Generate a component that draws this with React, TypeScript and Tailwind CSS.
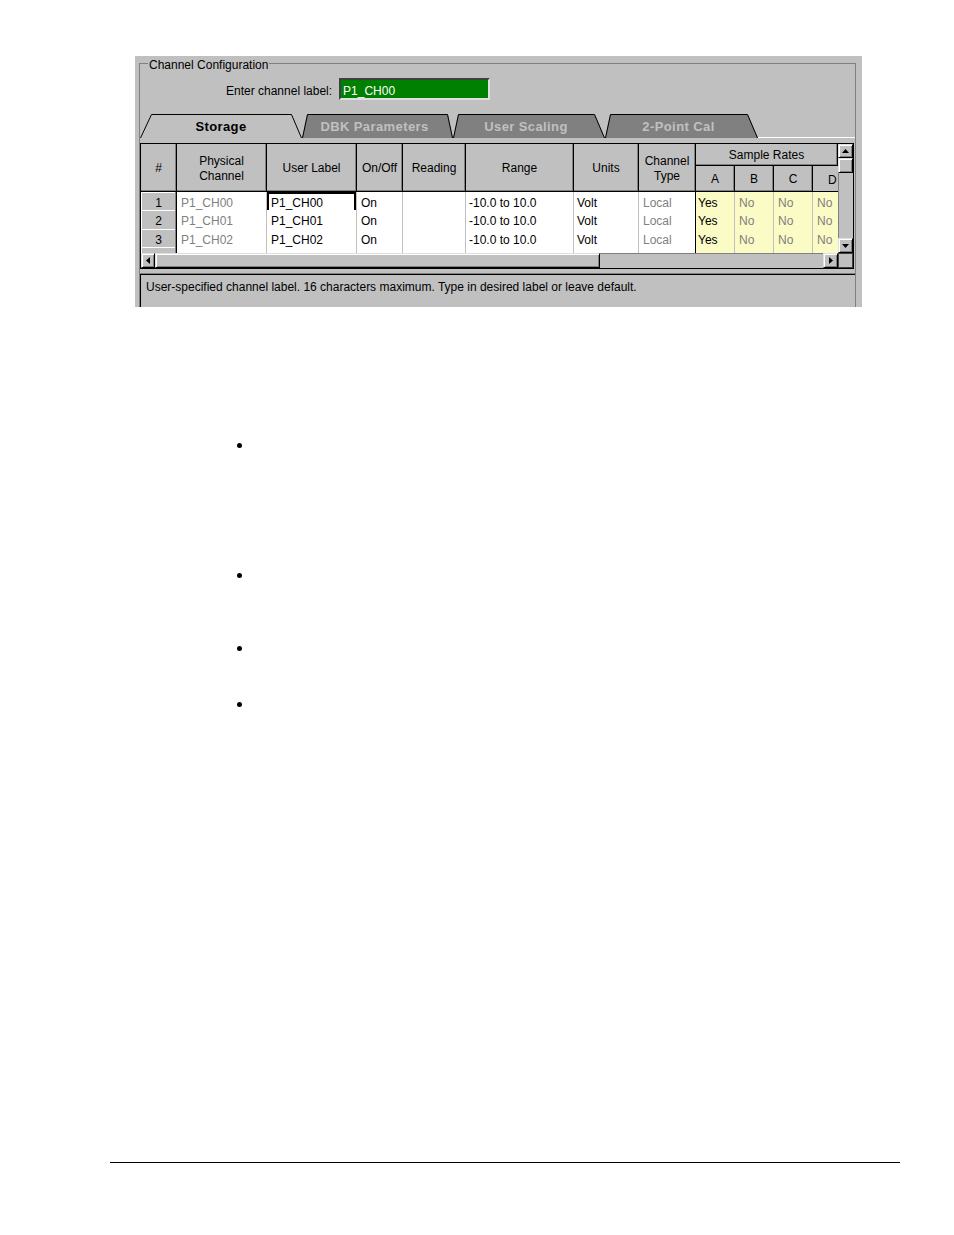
import React from "react";

const FONT = "font-['Liberation_Sans',Arial,sans-serif]";

const COLS =
  "grid grid-cols-[36px_90px_90px_46px_63px_108px_65px_57px_39px_39px_39px_25px]";

const HEAD =
  "flex items-center justify-center pt-[2px] bg-[#c0c0c0] border-r border-b border-black shadow-[inset_-1px_-1px_0_#808080] text-center leading-[15px]";

const NUM =
  "flex items-center justify-center pt-[2px] bg-[#c0c0c0] border-r border-b border-black shadow-[inset_-1px_-1px_0_#808080,inset_1px_1px_0_#ffffff]";

const CELL =
  "flex items-center pt-[2px] border-r border-b border-[#c0c0c0] whitespace-nowrap overflow-hidden";

const WHITE = "bg-white";
// pale yellow "dithered" background of the sample-rate cells
const DOTS = "bg-[#fbfbc6]";

const BTN =
  "flex items-center justify-center bg-[#c0c0c0] border border-t-[#dfdfdf] border-l-[#dfdfdf] border-r-black border-b-black shadow-[inset_1px_1px_0_#ffffff,inset_-1px_-1px_0_#808080]";

type Row = { n: string; phys: string; label: string; h: string };

const ROWS: Row[] = [
  { n: "1", phys: "P1_CH00", label: "P1_CH00", h: "h-[18px]" },
  { n: "2", phys: "P1_CH01", label: "P1_CH01", h: "h-[19px]" },
  { n: "3", phys: "P1_CH02", label: "P1_CH02", h: "h-[18px]" },
  { n: "4", phys: "P1_CH03", label: "P1_CH03", h: "h-[18px]" },
];

function Tab({
  label,
  w,
  wc,
  l,
  r,
  active,
}: {
  label: string;
  w: number;
  wc: string;
  l: number;
  r: number;
  active?: boolean;
}) {
  return (
    <div className={`relative h-[24px] shrink-0 flex items-center justify-center pt-[2px] ${wc}`}>
      <svg className="absolute inset-0" width={w} height={24} viewBox={`0 0 ${w} 24`}>
        <polygon
          points={`0,24 ${l},0.5 ${w - r},0.5 ${w},24`}
          fill={active ? "#c0c0c0" : "#808080"}
        />
        <polyline
          points={`0.5,24 ${l + 0.5},0.5 ${w - r - 0.5},0.5 ${w - 0.5},24`}
          fill="none"
          stroke="#000"
          strokeWidth={1}
        />
      </svg>
      <span
        className={
          active
            ? "relative text-[13px] font-bold tracking-[0.4px] text-black"
            : "relative text-[13px] font-bold tracking-[0.4px] text-[#c0c0c0] pr-[6px]"
        }
      >
        {label}
      </span>
    </div>
  );
}

function Arrow({ dir }: { dir: "up" | "down" | "left" | "right" }) {
  if (dir === "up")
    return (
      <svg width="7" height="4" viewBox="0 0 7 4">
        <polygon points="3.5,0 7,4 0,4" fill="#000" />
      </svg>
    );
  if (dir === "down")
    return (
      <svg width="7" height="4" viewBox="0 0 7 4">
        <polygon points="0,0 7,0 3.5,4" fill="#000" />
      </svg>
    );
  if (dir === "left")
    return (
      <svg width="4" height="7" viewBox="0 0 4 7">
        <polygon points="4,0 4,7 0,3.5" fill="#000" />
      </svg>
    );
  return (
    <svg width="4" height="7" viewBox="0 0 4 7">
      <polygon points="0,0 0,7 4,3.5" fill="#000" />
    </svg>
  );
}

function ChannelTable() {
  return (
    <div className="mt-[5px] w-[714px] border border-black bg-[#c0c0c0]">
      <div className="flex">
        <div className="w-[697px] overflow-hidden">
          {/* header */}
          <div className={`${COLS} grid-rows-[22px_26px] h-[48px]`}>
            <div className={`${HEAD} row-span-2`}>#</div>
            <div className={`${HEAD} row-span-2`}>
              Physical
              <br />
              Channel
            </div>
            <div className={`${HEAD} row-span-2`}>User Label</div>
            <div className={`${HEAD} row-span-2`}>On/Off</div>
            <div className={`${HEAD} row-span-2`}>Reading</div>
            <div className={`${HEAD} row-span-2`}>Range</div>
            <div className={`${HEAD} row-span-2`}>Units</div>
            <div className={`${HEAD} row-span-2`}>
              Channel
              <br />
              Type
            </div>
            <div className={`${HEAD} col-span-4`}>Sample Rates</div>
            <div className={HEAD}>A</div>
            <div className={HEAD}>B</div>
            <div className={HEAD}>C</div>
            <div className="flex items-center pt-[2px] pl-[15px] bg-[#c0c0c0] border-b border-black">D</div>
          </div>

          {/* rows */}
          <div className="h-[61px] overflow-hidden">
            {ROWS.map((r, i) => (
              <div key={r.n} className={`${COLS} ${r.h}`}>
                <div className={NUM}>{r.n}</div>
                <div className={`${CELL} ${WHITE} pl-[4px] text-[#808080]`}>{r.phys}</div>
                <div
                  className={
                    i === 0
                      ? `${CELL} ${WHITE} pl-[4px] shadow-[inset_0_0_0_2px_#000]`
                      : `${CELL} ${WHITE} pl-[4px]`
                  }
                >
                  {r.label}
                </div>
                <div className={`${CELL} ${WHITE} pl-[4px]`}>On</div>
                <div className={`${CELL} ${WHITE}`}></div>
                <div className={`${CELL} ${WHITE} pl-[3px]`}>-10.0 to 10.0</div>
                <div className={`${CELL} ${WHITE} pl-[3px]`}>Volt</div>
                <div className={`${CELL} ${WHITE} pl-[4px] text-[#808080] border-r-black`}>Local</div>
                <div className={`${CELL} ${DOTS} pl-[2px]`}>Yes</div>
                <div className={`${CELL} ${DOTS} pl-[4px] text-[#808080]`}>No</div>
                <div className={`${CELL} ${DOTS} pl-[4px] text-[#808080]`}>No</div>
                <div className={`flex items-center pt-[2px] border-b border-[#c0c0c0] overflow-hidden ${DOTS} pl-[4px] text-[#808080]`}>
                  No
                </div>
              </div>
            ))}
          </div>
        </div>

        {/* vertical scrollbar */}
        <div className="w-[15px] h-[109px] flex flex-col">
          <div className={`${BTN} h-[14px]`}>
            <Arrow dir="up" />
          </div>
          <div className={`${BTN} h-[15px]`} />
          <div className="flex-1 bg-[#c0c0c0] border-l border-[#808080]" />
          <div className={`${BTN} h-[15px]`}>
            <Arrow dir="down" />
          </div>
        </div>
      </div>

      {/* horizontal scrollbar */}
      <div className="flex h-[15px]">
        <div className="w-[697px] flex">
          <div className={`${BTN} w-[14px]`}>
            <Arrow dir="left" />
          </div>
          <div className={`${BTN} w-[445px]`} />
          <div className="flex-1 bg-[#c0c0c0] border-t border-[#808080]" />
          <div className={`${BTN} w-[15px]`}>
            <Arrow dir="right" />
          </div>
        </div>
        <div className="w-[15px] bg-[#c0c0c0] border border-[#404040]" />
      </div>
    </div>
  );
}

export default function App() {
  return (
    <div className={`${FONT} bg-white min-h-[1235px] w-[954px] text-[12px] text-black`}>
      <div className="pt-[56px] pl-[135px]">
        <div className="w-[727px] h-[251px] bg-[#c0c0c0] overflow-hidden pl-[4px] pt-[7px] flex flex-col">
          <div className="relative w-[717px] flex-1 flex flex-col border-t border-l border-r border-[#808080]">
            <span className="absolute -top-[6px] left-[8px] px-[1px] bg-[#c0c0c0] leading-[14px]">
              Channel Configuration
            </span>

            <div className="mt-[14px] flex items-center pl-[86px] h-[22px]">
              <span className="mt-[4px] leading-[14px]">Enter channel label:</span>
              <div className="ml-[7px] w-[151px] h-[22px] flex items-center pl-[2px] pt-[3px] bg-[#008000] text-white border-2 border-t-[#404040] border-l-[#404040] border-r-[#dfdfdf] border-b-[#dfdfdf]">
                P1_CH00
              </div>
            </div>

            <div className="mt-[14px] flex h-[24px]">
              <Tab label="Storage" w={162} wc="w-[162px]" l={11} r={10} active />
              <Tab label="DBK Parameters" w={151} wc="w-[151px]" l={5} r={5} />
              <Tab label="User Scaling" w={152} wc="w-[152px]" l={5} r={10} />
              <Tab label="2-Point Cal" w={153} wc="w-[153px]" l={5} r={10} />
              <div className="flex-1 border-b border-white" />
            </div>

            <ChannelTable />

            <div className="mt-[4px] -ml-px flex-1 border-t border-l border-[#808080] shadow-[inset_1px_1px_0_#000000] pl-[6px] pt-[6px] leading-[14px]">
              User-specified channel label. 16 characters maximum. Type in desired label or leave
              default.
            </div>
          </div>
        </div>
      </div>

      <div className="pl-[237px] flex flex-col">
        <div className="mt-[136px] w-[5px] h-[5px] rounded-full bg-black" />
        <div className="mt-[125px] w-[5px] h-[5px] rounded-full bg-black" />
        <div className="mt-[68px] w-[5px] h-[5px] rounded-full bg-black" />
        <div className="mt-[51px] w-[5px] h-[5px] rounded-full bg-black" />
      </div>

      <div className="ml-[110px] mt-[455px] w-[790px] h-px bg-black" />
    </div>
  );
}
